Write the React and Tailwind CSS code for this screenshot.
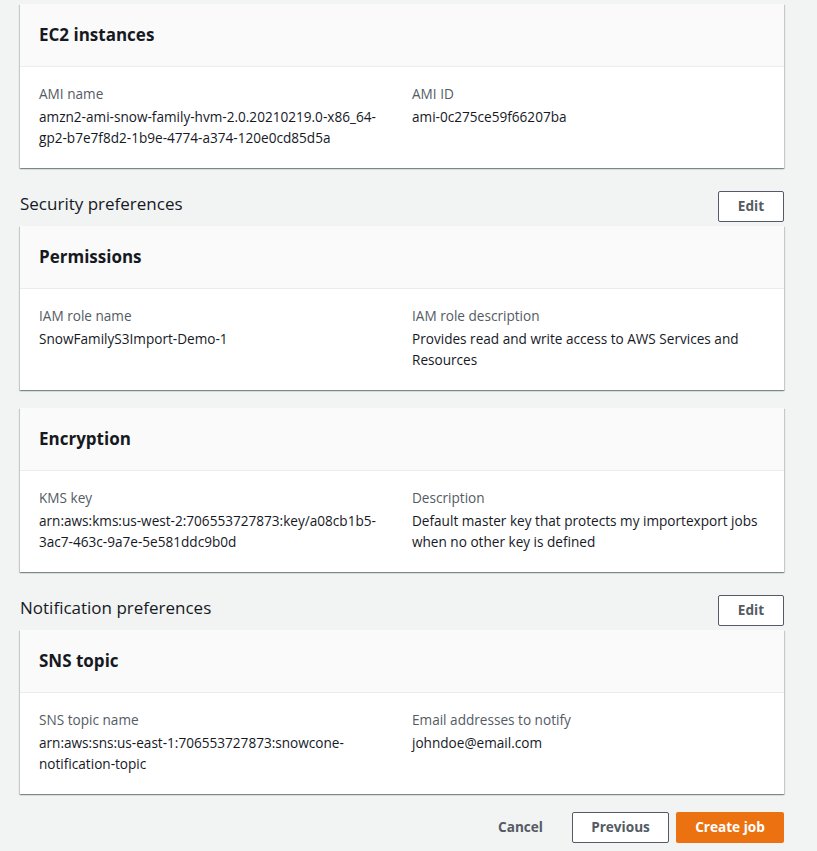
const font = { fontFamily: '"Open Sans", "Noto Sans", sans-serif' }

function Field({ label, lines }) {
  return (
    <div>
      <div className="text-[13.6px] leading-[20px] text-[#545b64]">{label}</div>
      <div className="mt-[2px] text-[13.6px] leading-[21px] text-[#16191f]">
        {lines.map((l, i) => (
          <div key={i} className="whitespace-nowrap">{l}</div>
        ))}
      </div>
    </div>
  )
}

function Card({ title, left, right }) {
  return (
    <div className="bg-white shadow-[0_1px_1px_0_rgba(0,28,36,0.3),1px_1px_1px_0_rgba(0,28,36,0.15),-1px_1px_1px_0_rgba(0,28,36,0.15)]">
      <div className="bg-[#fafafa] border-b border-[#eaeded] px-[19px] py-[20px]">
        <h2 className="text-[17px] leading-[22px] font-bold text-[#16191f]">{title}</h2>
      </div>
      <div className="grid grid-cols-2 gap-[20px] px-[19px] pt-[17px] pb-[20px]">
        <Field {...left} />
        <Field {...right} />
      </div>
    </div>
  )
}

function SectionHeader({ title }) {
  return (
    <div className="flex items-start justify-between mb-[4px]">
      <h2 className="mt-[2px] text-[17px] leading-[22px] text-[#16191f]">{title}</h2>
      <button className="h-[31px] w-[66px] border border-[#545b64] bg-white rounded-[2px] text-[13.6px] font-bold text-[#545b64]">
        Edit
      </button>
    </div>
  )
}

export default function App() {
  return (
    <div style={font} className="min-h-[851px] bg-[#f2f3f3] pl-[20px] pr-[33px] pt-[4px] pb-[9px]">
      <Card
        title="EC2 instances"
        left={{ label: 'AMI name', lines: ['amzn2-ami-snow-family-hvm-2.0.20210219.0-x86_64-', 'gp2-b7e7f8d2-1b9e-4774-a374-120e0cd85d5a'] }}
        right={{ label: 'AMI ID', lines: ['ami-0c275ce59f66207ba'] }}
      />

      <div className="mt-[23px]">
        <SectionHeader title="Security preferences" />
        <Card
          title="Permissions"
          left={{ label: 'IAM role name', lines: ['SnowFamilyS3Import-Demo-1'] }}
          right={{ label: 'IAM role description', lines: ['Provides read and write access to AWS Services and', 'Resources'] }}
        />
        <div className="mt-[18px]">
          <Card
            title="Encryption"
            left={{ label: 'KMS key', lines: ['arn:aws:kms:us-west-2:706553727873:key/a08cb1b5-', '3ac7-463c-9a7e-5e581ddc9b0d'] }}
            right={{ label: 'Description', lines: ['Default master key that protects my importexport jobs', 'when no other key is defined'] }}
          />
        </div>
      </div>

      <div className="mt-[23px]">
        <SectionHeader title="Notification preferences" />
        <Card
          title="SNS topic"
          left={{ label: 'SNS topic name', lines: ['arn:aws:sns:us-east-1:706553727873:snowcone-', 'notification-topic'] }}
          right={{ label: 'Email addresses to notify', lines: ['johndoe@email.com'] }}
        />
      </div>

      <div className="mt-[18px] flex items-center justify-end">
        <button className="px-[20px] h-[31px] text-[13.6px] font-bold text-[#545b64]">Cancel</button>
        <button className="ml-[9px] h-[31px] w-[97px] border border-[#545b64] bg-white rounded-[2px] text-[13.6px] font-bold text-[#545b64]">
          Previous
        </button>
        <button className="ml-[7px] h-[31px] w-[108px] bg-[#ec7211] rounded-[2px] text-[13.6px] font-bold text-white">
          Create job
        </button>
      </div>
    </div>
  )
}
